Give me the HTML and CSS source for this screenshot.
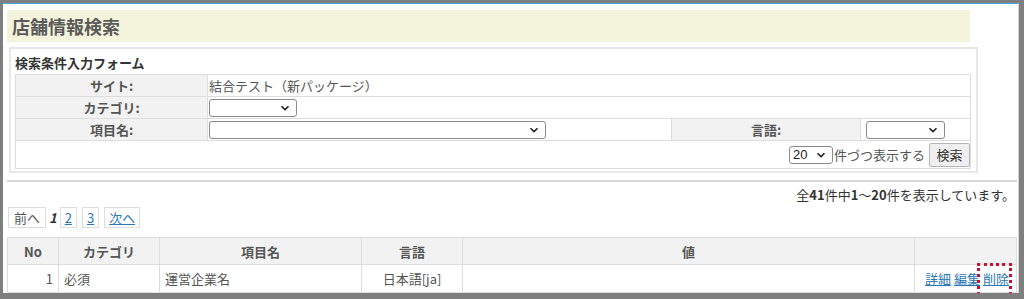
FILE: index.html
```html
<!DOCTYPE html>
<html lang="ja">
<head>
    <meta charset="UTF-8">
    <meta name="viewport" content="width=device-width, initial-scale=1.0">
    <title>店舗情報検索</title>
    <link rel="stylesheet" href="styles.css">
</head>
<body>
<div class="frame">
    <div class="screen">
        <h1 class="page-title">店舗情報検索</h1>

        <form class="search-box">
            <h2>検索条件入力フォーム</h2>
            <table class="search-table">
                <tr>
                    <th>サイト:</th>
                    <td colspan="3">結合テスト（新パッケージ）</td>
                </tr>
                <tr>
                    <th>カテゴリ:</th>
                    <td colspan="3"><select class="sel-category"><option></option></select></td>
                </tr>
                <tr>
                    <th>項目名:</th>
                    <td class="cell-item"><select class="sel-item"><option></option></select></td>
                    <th class="label-lang">言語:</th>
                    <td class="cell-lang"><select class="sel-lang"><option></option></select></td>
                </tr>
                <tr>
                    <td colspan="4" class="cell-submit">
                        <select class="sel-count"><option>20</option></select><span>件づつ表示する</span><button type="button">検索</button>
                    </td>
                </tr>
            </table>
        </form>

        <hr class="divider">

        <p class="result-count">全<b>41</b>件中<b>1</b>～<b>20</b>件を表示しています。</p>

        <div class="pager">
            <span class="pg disabled">前へ</span>
            <span class="current">1</span>
            <a class="pg" href="#">2</a>
            <a class="pg" href="#">3</a>
            <a class="pg" href="#">次へ</a>
        </div>

        <table class="list">
            <colgroup>
                <col style="width: 51px">
                <col style="width: 101px">
                <col style="width: 202px">
                <col style="width: 101px">
                <col style="width: 452px">
                <col>
            </colgroup>
            <thead>
                <tr>
                    <th>No</th>
                    <th>カテゴリ</th>
                    <th>項目名</th>
                    <th>言語</th>
                    <th>値</th>
                    <th></th>
                </tr>
            </thead>
            <tbody>
                <tr>
                    <td class="num">1</td>
                    <td>必須</td>
                    <td>運営企業名</td>
                    <td class="center">日本語[ja]</td>
                    <td></td>
                    <td class="actions"><a href="#">詳細</a> <a href="#">編集</a> <a href="#" class="marked">削除</a></td>
                </tr>
            </tbody>
        </table>
    </div>
</div>
</body>
</html>
```

FILE: styles.css
```css
body {
    margin: 0;
    font-family: "Noto Sans CJK JP", "Liberation Sans", sans-serif;
    font-size: 13px;
    color: #555;
    background: #fff;
}
.frame {
    width: 1024px;
    height: 299px;
    box-sizing: border-box;
    border-style: solid;
    border-color: #7f7f7f;
    border-width: 3px 5px 6px 3px;
    overflow: hidden;
}
.screen {
    height: 100%;
    box-sizing: border-box;
    border-top: 1px solid #3ea8dc;
    border-right: 1px solid #d4d4d4;
    padding: 6px 1px 0 4px;
}
.page-title {
    width: 958px;
    height: 32px;
    margin: 0;
    padding-left: 5px;
    background-color: #f4f4dc;
    font-size: 18px;
    line-height: 32px;
    color: #5a5a5a;
}
.search-box {
    width: 969px;
    box-sizing: border-box;
    margin: 5px 0 0 2px;
    padding: 0 5px 2px 4px;
    border: 2px solid #e8e8e8;
}
.search-box h2 {
    margin: 0 0 2px 0;
    padding-top: 5px;
    font-size: 13px;
    line-height: 18px;
    color: #333;
}
.search-table {
    width: 956px;
    border-collapse: collapse;
}
.search-table th, .search-table td {
    border: 1px solid #ddd;
    height: 21px;
    padding: 0 1px;
    line-height: 16px;
    text-align: left;
}
.search-table th {
    width: 189px;
    background-color: #f2f2f2;
    text-align: center;
}
.search-table .label-lang {
    width: 186px;
}
.search-table .cell-item {
    width: 461px;
}
select {
    -webkit-appearance: none;
    appearance: none;
    height: 18px;
    box-sizing: border-box;
    font-family: "Liberation Sans", sans-serif;
    font-size: 13px;
    color: #222;
    border: 1px solid #8a8a8a;
    border-radius: 3px;
    background: #fff url("data:image/svg+xml,%3Csvg xmlns='http://www.w3.org/2000/svg' width='10' height='6' viewBox='0 0 10 6'%3E%3Cpath d='M1.5 1.2 5 4.6 8.5 1.2' fill='none' stroke='%23222' stroke-width='1.6'/%3E%3C/svg%3E") no-repeat right 6px center;
    vertical-align: middle;
    padding: 0 0 0 3px;
}
.sel-category { width: 88px; }
.sel-item { width: 337px; }
.sel-lang { width: 79px; margin-left: 4px; }
.sel-count { width: 44px; }
.search-table .cell-submit {
    height: 27px;
    text-align: right;
    padding: 0;
}
.cell-submit span {
    vertical-align: middle;
    margin-left: 1px;
}
.cell-submit button {
    height: 24px;
    width: 41px;
    margin-left: 4px;
    padding: 0;
    font-family: inherit;
    font-size: 13px;
    color: #333;
    background: #efefef;
    border: 1px solid #b5b5b5;
    border-radius: 2px;
    vertical-align: middle;
}
.divider {
    margin: 7px 0 0 0;
    border: 0;
    border-top: 2px solid #d8d8d8;
}
.result-count {
    margin: 5px 0 0 0;
    padding-right: 2px;
    text-align: right;
    line-height: 16px;
    color: #333;
}
.pager {
    margin: 4px 0 0 1px;
    height: 21px;
    display: flex;
    align-items: center;
    gap: 3px;
}
.pg {
    display: inline-block;
    height: 19px;
    line-height: 19px;
    padding: 0 4px;
    border: 1px solid #ddd;
    background: #fff;
}
.pg.disabled {
    padding: 0 5px;
    color: #555;
}
.current {
    font-style: italic;
    font-weight: bold;
    margin: 0;
    color: #333;
}
.pager a.pg + a.pg {
    margin-left: 2px;
}
a {
    color: #2a77b5;
}
.list {
    width: 100%;
    table-layout: fixed;
    margin-top: 9px;
    border-collapse: collapse;
}
.list th, .list td {
    border: 1px solid #ddd;
    padding: 0 5px;
    text-align: left;
}
.list th {
    height: 26px;
    background-color: #f2f2f2;
    text-align: center;
    color: #555;
}
.list td {
    height: 27px;
}
.list td.num { text-align: right; }
.list td.center { text-align: center; }
.list td.actions {
    text-align: right;
    padding-right: 7px;
    white-space: nowrap;
}
.marked {
    position: relative;
}
.marked::after {
    content: "";
    position: absolute;
    left: -6px;
    right: -3px;
    top: -6px;
    bottom: -12px;
    border: 3px dotted #c8102e;
}
```
